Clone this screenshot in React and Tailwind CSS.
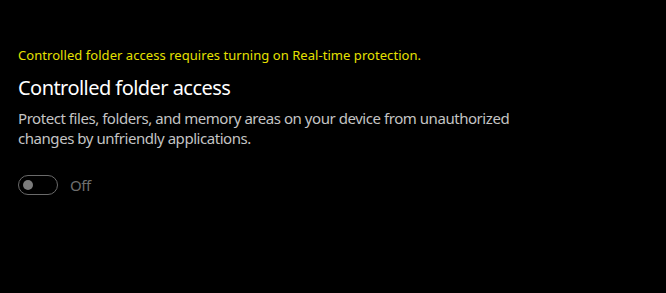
export default function App() {
  return (
    <div
      className="bg-black h-[293px] w-[666px] pl-[18px] pt-[45px] flex flex-col"
      style={{ fontFamily: '"Noto Sans", sans-serif' }}
    >
      <div className="text-[13px] leading-[20px] tracking-[0.05px] text-[#e6e000]">
        Controlled folder access requires turning on Real-time protection.
      </div>
      <div className="mt-[9px] text-[20px] leading-[28px] tracking-[-0.55px] text-white">
        Controlled folder access
      </div>
      <div className="mt-[7px] w-[520px] text-[15px] leading-[19.5px] tracking-[-0.45px] text-[#c4c4c4]">
        Protect files, folders, and memory areas on your device from unauthorized
        <br />
        changes by unfriendly applications.
      </div>
      <div className="mt-[27px] flex items-center gap-[12px]">
        <div className="w-[40px] h-[20px] rounded-full border border-[#6a6a6a] flex items-center pl-[4px]">
          <div className="w-[10px] h-[10px] rounded-full bg-[#7c7c7c]"></div>
        </div>
        <span className="text-[15px] leading-[20px] tracking-[-0.45px] text-[#6e6e6e]">Off</span>
      </div>
    </div>
  );
}
